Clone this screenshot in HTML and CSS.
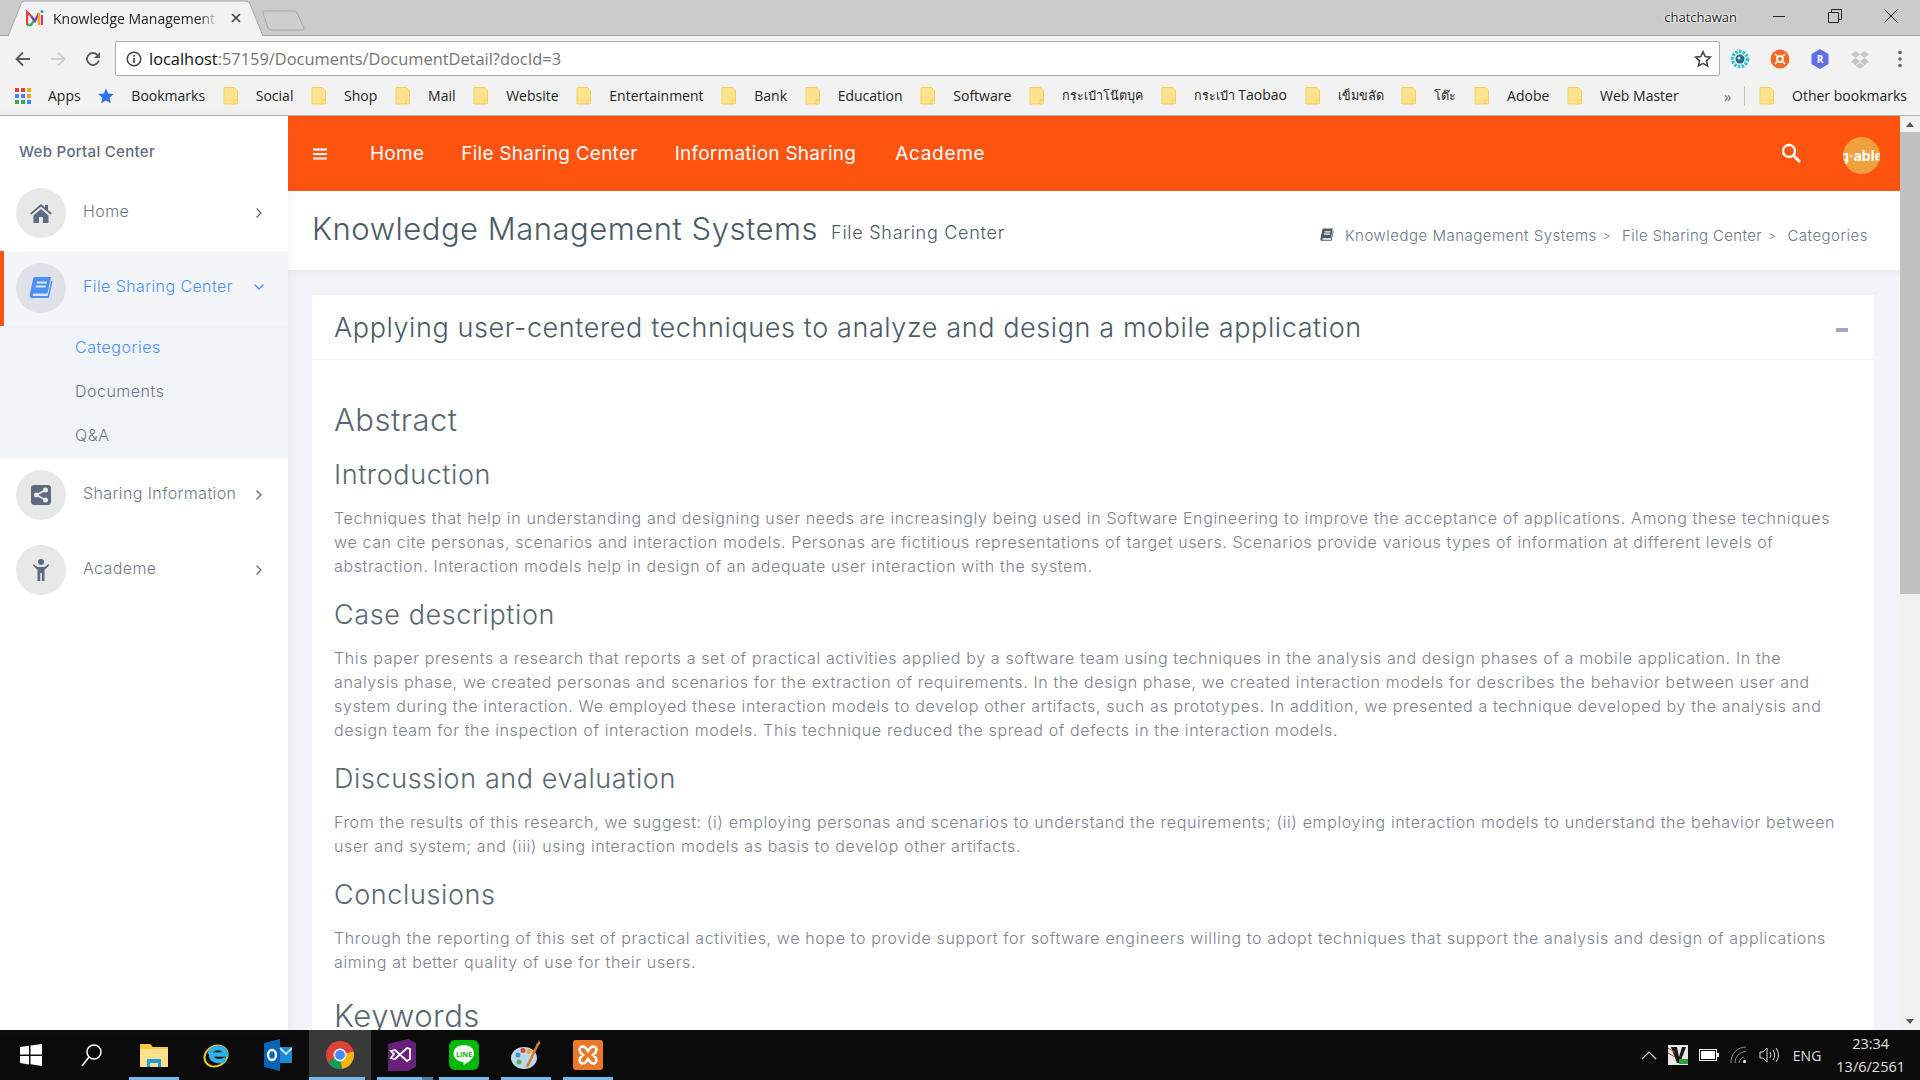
FILE: index.html
```html
<!DOCTYPE html>
<html lang="en">
<head>
    <meta charset="UTF-8">
    <title>Knowledge Management Systems</title>
    <link rel="stylesheet" href="styles.css">
</head>
<body>
    <svg class="defs" width="0" height="0">
        <symbol id="folder" viewBox="0 0 16 20">
            <path d="M1 1.500h10.500l3 3v12a1.500 1.500 0 0 1-1.500 1.500h-12z" fill="#fee38d" stroke="#f3cf62"/>
            <path d="M11 18v-4h3.500v4" fill="none" stroke="#f3cf62"/>
        </symbol>
        <symbol id="chev-right" viewBox="0 0 8 12"><path d="M1.500 1.500 6 6l-4.500 4.500" fill="none" stroke="currentColor" stroke-width="1.300"/></symbol>
        <symbol id="book" viewBox="0 0 24 24">
            <path fill="currentColor" d="M6 1h16l-3.500 16.500H5.500c-1.200 0-1.800.6-1.800 1.300 0 .8.600 1.300 1.800 1.300h13.200l3.500-15.600 1.300.8-3.600 16.600H4.500C1.800 22.900.3 21 .8 18.500L4 3C4.300 1.800 5 1 6 1zm2 4.500-.4 2h10l.4-2zm-1 4-.4 2h10l.4-2z"/>
        </symbol>
    </svg>

    <header class="browser">
        <div class="tabstrip">
            <div class="tab">
                <svg class="tab-shape" width="262" height="36" viewBox="0 0 262 36"><path d="M2 36 15 4Q16 1 19 1H240Q243 1 244 4L257 36" fill="#f2f2f2" stroke="#a8a8a8"/></svg>
                <svg class="favicon" width="18" height="18" viewBox="0 0 18 18">
                    <path d="M1 16V3l4 4" fill="none" stroke="#e2403c" stroke-width="2.400"/>
                    <path d="M1 16h4l4-6" fill="none" stroke="#35b36a" stroke-width="2.400"/>
                    <path d="M5 7l4 5 4-8" fill="none" stroke="#7a3fb0" stroke-width="2.400"/>
                    <path d="M13 16V4" stroke="#f2a51f" stroke-width="2.600"/>
                    <path d="M16 16V6" stroke="#d6336c" stroke-width="2"/>
                    <circle cx="16" cy="2.500" r="1.500" fill="#1f9be0"/>
                </svg>
                <span class="tab-title">Knowledge Management</span>
                <svg class="tab-close" width="10" height="10" viewBox="0 0 10 10"><path d="M1 1l8 8M9 1 1 9" stroke="#444" stroke-width="1.700"/></svg>
            </div>
            <svg class="newtab" width="44" height="22" viewBox="0 0 44 22"><path d="M1 2h31q2 0 3 2l7 15q.5 2-2 2H9q-2 0-3-2L1 4q-1-2 0-2z" fill="#cecece" stroke="#a6a6a6"/></svg>
            <span class="win-user">chatchawan</span>
            <div class="win-controls">
                <svg width="14" height="14" viewBox="0 0 14 14"><path d="M1 7.500h12" stroke="#222"/></svg>
                <svg width="14" height="14" viewBox="0 0 14 14"><path d="M.5 3.500h10v10H.5zM3.500 3.500V.5h10v10h-3" fill="none" stroke="#222"/></svg>
                <svg width="14" height="14" viewBox="0 0 14 14"><path d="M.5.500l13 13M13.500.5l-13 13" stroke="#222"/></svg>
            </div>
        </div>

        <div class="toolbar">
            <div class="nav-btns">
                <svg width="16" height="16" viewBox="0 0 16 16"><path d="M15 8H2M8 1.500 1.500 8 8 14.500" fill="none" stroke="#5a5a5a" stroke-width="1.800"/></svg>
                <svg width="16" height="16" viewBox="0 0 16 16"><path d="M1 8h13M8 1.500 14.500 8 8 14.500" fill="none" stroke="#cfcfcf" stroke-width="1.800"/></svg>
                <svg width="16" height="16" viewBox="0 0 16 16"><path d="M13.800 9.500A6 6 0 1 1 12.300 3.800" fill="none" stroke="#5a5a5a" stroke-width="1.800"/><path d="M15 1v6h-6z" fill="#5a5a5a"/></svg>
            </div>
            <div class="omnibox">
                <svg class="info" width="16" height="16" viewBox="0 0 16 16"><circle cx="8" cy="8" r="6.800" fill="none" stroke="#444" stroke-width="1.500"/><path d="M8 7v5M8 4v1.800" stroke="#444" stroke-width="1.600"/></svg>
                <span class="url"><b>localhost</b>:57159/Documents/DocumentDetail?docId=3</span>
                <svg class="star" width="18" height="18" viewBox="0 0 18 18"><path d="M9 1.800l2.200 4.800 5.200.6-3.900 3.500 1.100 5.200L9 13.300l-4.600 2.600 1.100-5.200L1.600 7.200l5.200-.6z" fill="none" stroke="#444" stroke-width="1.600"/></svg>
            </div>
            <div class="ext-icons">
                <svg width="20" height="20" viewBox="0 0 20 20"><circle cx="10" cy="10" r="7.500" fill="none" stroke="#2cc3d0" stroke-width="3.500" stroke-dasharray="2.500 1.300"/><circle cx="10" cy="10" r="4.500" fill="#1d6f8c"/><circle cx="9" cy="9" r="1.500" fill="#d8f4f6"/></svg>
                <svg width="20" height="20" viewBox="0 0 20 20"><circle cx="10" cy="10" r="9.500" fill="#f26a25"/><circle cx="10" cy="10" r="3" fill="none" stroke="#fff" stroke-width="1.800"/><path d="M5 5l2 2M15 5l-2 2M5 15l2-2M15 15l-2-2" stroke="#fff" stroke-width="1.500"/></svg>
                <svg width="20" height="20" viewBox="0 0 20 20"><path d="M10 0l8.500 5v10L10 20 1.500 15V5z" fill="#5d6ee6"/><text x="10" y="14" class="ext-r">R</text></svg>
                <svg width="20" height="20" viewBox="0 0 20 20"><path d="M5.500 2 1 5.500 5.500 9 10 5.500zM14.500 2 10 5.500 14.500 9 19 5.500zM5.500 9 1 12.500 5.500 16 10 12.500zM14.500 9 10 12.500 14.500 16 19 12.500zM5.500 17 10 14l4.500 3L10 19.500z" fill="#c6c6c6"/></svg>
                <svg width="20" height="20" viewBox="0 0 20 20"><circle cx="10" cy="3.500" r="1.800" fill="#666"/><circle cx="10" cy="10" r="1.800" fill="#666"/><circle cx="10" cy="16.500" r="1.800" fill="#666"/></svg>
            </div>
        </div>

        <div class="bookmarks">
            <span class="bm apps">
                <svg width="16" height="16" viewBox="0 0 16 16">
                    <path d="M0 0h4v4H0z" fill="#e2403c"/><path d="M6 0h4v4H6z" fill="#e2403c"/><path d="M12 0h4v4h-4z" fill="#f2a51f"/>
                    <path d="M0 6h4v4H0z" fill="#4285f4"/><path d="M6 6h4v4H6z" fill="#4285f4"/><path d="M12 6h4v4h-4z" fill="#f2a51f"/>
                    <path d="M0 12h4v4H0z" fill="#34a853"/><path d="M6 12h4v4H6z" fill="#34a853"/><path d="M12 12h4v4h-4z" fill="#4285f4"/>
                </svg>
                Apps
            </span>
            <span class="bm">
                <svg width="16" height="16" viewBox="0 0 16 16"><path d="M8 .5l2.300 5 5.400.600-4 3.700 1.100 5.400L8 12.500l-4.800 2.700 1.100-5.400-4-3.700 5.400-.600z" fill="#2f74e8"/></svg>
                Bookmarks
            </span>
            <span class="bm"><svg class="folder"><use href="#folder"/></svg>Social</span>
            <span class="bm"><svg class="folder"><use href="#folder"/></svg>Shop</span>
            <span class="bm"><svg class="folder"><use href="#folder"/></svg>Mail</span>
            <span class="bm"><svg class="folder"><use href="#folder"/></svg>Website</span>
            <span class="bm"><svg class="folder"><use href="#folder"/></svg>Entertainment</span>
            <span class="bm"><svg class="folder"><use href="#folder"/></svg>Bank</span>
            <span class="bm"><svg class="folder"><use href="#folder"/></svg>Education</span>
            <span class="bm"><svg class="folder"><use href="#folder"/></svg>Software</span>
            <span class="bm"><svg class="folder"><use href="#folder"/></svg><span class="th">กระเป๋าโน๊ตบุค</span></span>
            <span class="bm"><svg class="folder"><use href="#folder"/></svg><span><span class="th">กระเป๋า</span> Taobao</span></span>
            <span class="bm"><svg class="folder"><use href="#folder"/></svg><span class="th">เข็มขลัด</span></span>
            <span class="bm"><svg class="folder"><use href="#folder"/></svg><span class="th">โต๊ะ</span></span>
            <span class="bm"><svg class="folder"><use href="#folder"/></svg>Adobe</span>
            <span class="bm"><svg class="folder"><use href="#folder"/></svg>Web Master</span>
            <span class="bm-more">»</span>
            <span class="bm bm-other"><svg class="folder"><use href="#folder"/></svg>Other bookmarks</span>
        </div>
    </header>

    <div class="viewport">
        <aside class="sidebar">
            <div class="brand">Web Portal Center</div>
            <a class="menu-item">
                <span class="menu-icon">
                    <svg width="22" height="20" viewBox="0 0 22 20"><path d="M11 1 0 10.500l1.200 1.300L11 3.500l9.800 8.300 1.200-1.300-4-3.400V2h-3v2.400zM3.500 12.500V20h5.500v-6h4v6h5.500v-7.500L11 6z" fill="#5f6b80"/></svg>
                </span>
                <span class="menu-text">Home</span>
                <svg class="menu-arrow"><use href="#chev-right"/></svg>
            </a>
            <a class="menu-item active">
                <span class="menu-icon"><svg class="book-lg"><use href="#book"/></svg></span>
                <span class="menu-text">File Sharing Center</span>
                <svg class="menu-arrow down" viewBox="0 0 12 8"><path d="M1.500 1.500 6 6l4.500-4.500" fill="none" stroke="currentColor" stroke-width="1.300"/></svg>
            </a>
            <div class="submenu">
                <a class="sub-item current">Categories</a>
                <a class="sub-item">Documents</a>
                <a class="sub-item">Q&amp;A</a>
            </div>
            <a class="menu-item">
                <span class="menu-icon">
                    <svg width="20" height="20" viewBox="0 0 20 20"><rect width="20" height="20" rx="3" fill="#5f6b80"/><g fill="#e8e8e8"><circle cx="14.500" cy="5" r="2.500"/><circle cx="5.500" cy="10" r="2.500"/><circle cx="14.500" cy="15" r="2.500"/></g><path d="M14.500 5l-9 5 9 5" fill="none" stroke="#e8e8e8" stroke-width="1.500"/></svg>
                </span>
                <span class="menu-text">Sharing Information</span>
                <svg class="menu-arrow"><use href="#chev-right"/></svg>
            </a>
            <a class="menu-item">
                <span class="menu-icon">
                    <svg width="16" height="22" viewBox="0 0 16 22"><circle cx="8" cy="3" r="3" fill="#5f6b80"/><path d="M.5 5 4.500 8h7l4-3 .5 1.500L11.500 11v11H8.800v-8H7.200v8H4.500V11L0 6.500z" fill="#5f6b80"/></svg>
                </span>
                <span class="menu-text">Academe</span>
                <svg class="menu-arrow"><use href="#chev-right"/></svg>
            </a>
        </aside>

        <div class="main">
            <nav class="topbar">
                <svg class="burger" width="14" height="12" viewBox="0 0 14 12"><path d="M0 1.500h14M0 6h14M0 10.500h14" stroke="#fff" stroke-width="2"/></svg>
                <a class="top-link">Home</a>
                <a class="top-link">File Sharing Center</a>
                <a class="top-link">Information Sharing</a>
                <a class="top-link">Academe</a>
                <svg class="top-search" width="20" height="20" viewBox="0 0 20 20"><circle cx="8" cy="8" r="6" fill="none" stroke="#fff" stroke-width="2.400"/><path d="M12.500 12.500 19 19" stroke="#fff" stroke-width="2.800"/></svg>
                <span class="avatar"><span class="avatar-text">g·able</span></span>
            </nav>

            <div class="subheader">
                <h1 class="page-title">Knowledge Management Systems</h1>
                <span class="page-sub">File Sharing Center</span>
                <div class="crumbs">
                    <svg class="book-sm"><use href="#book"/></svg>
                    <span class="crumb c1">Knowledge Management Systems</span>
                    <span class="crumb-sep">&gt;</span>
                    <span class="crumb c2">File Sharing Center</span>
                    <span class="crumb-sep">&gt;</span>
                    <span class="crumb c3">Categories</span>
                </div>
            </div>

            <div class="content">
                <section class="card">
                    <div class="card-head">
                        <h2 class="card-title">Applying user-centered techniques to analyze and design a mobile application</h2>
                        <span class="card-min"></span>
                    </div>
                    <div class="card-body">
                        <h3 class="h-main">Abstract</h3>
                        <h4 class="h-sec">Introduction</h4>
                        <p>Techniques that help in understanding and designing user needs are increasingly being used in Software Engineering to improve the acceptance of applications. Among these techniques<br>we can cite personas, scenarios and interaction models. Personas are fictitious representations of target users. Scenarios provide various types of information at different levels of<br>abstraction. Interaction models help in design of an adequate user interaction with the system.</p>
                        <h4 class="h-sec">Case description</h4>
                        <p>This paper presents a research that reports a set of practical activities applied by a software team using techniques in the analysis and design phases of a mobile application. In the<br>analysis phase, we created personas and scenarios for the extraction of requirements. In the design phase, we created interaction models for describes the behavior between user and<br>system during the interaction. We employed these interaction models to develop other artifacts, such as prototypes. In addition, we presented a technique developed by the analysis and<br>design team for the inspection of interaction models. This technique reduced the spread of defects in the interaction models.</p>
                        <h4 class="h-sec">Discussion and evaluation</h4>
                        <p>From the results of this research, we suggest: (i) employing personas and scenarios to understand the requirements; (ii) employing interaction models to understand the behavior between<br>user and system; and (iii) using interaction models as basis to develop other artifacts.</p>
                        <h4 class="h-sec">Conclusions</h4>
                        <p>Through the reporting of this set of practical activities, we hope to provide support for software engineers willing to adopt techniques that support the analysis and design of applications<br>aiming at better quality of use for their users.</p>
                        <h3 class="h-main h-keywords">Keywords</h3>
                    </div>
                </section>
            </div>
        </div>

        <div class="scrollbar">
            <span class="arrow-up"></span>
            <span class="thumb"></span>
            <span class="arrow-down"></span>
        </div>
    </div>

    <footer class="taskbar">
        <span class="task task-start">
            <svg width="24" height="24" viewBox="0 0 24 24"><path d="M1 4l9-1.300v8.800H1zM11.500 2.500 23 1v10.500H11.500zM1 13h9v8.500L1 20zM11.500 13H23v10l-11.500-1.700z" fill="#fff"/></svg>
        </span>
        <span class="task">
            <svg width="22" height="24" viewBox="0 0 22 24"><circle cx="13" cy="9" r="7" fill="none" stroke="#fff" stroke-width="1.500"/><path d="M8 14 1 23" stroke="#fff" stroke-width="1.600"/></svg>
        </span>
        <span class="task open">
            <svg width="28" height="24" viewBox="0 0 28 24"><path d="M0 1h10l3 3h15v20H0z" fill="#f6c93f"/><path d="M0 6h28v18H0z" fill="#fde08a"/><path d="M7 24v-8h14v8h-3v-4h-8v4z" fill="#1f9be0"/></svg>
        </span>
        <span class="task">
            <svg width="30" height="32" viewBox="0 0 30 32"><ellipse cx="15" cy="17" rx="12" ry="10" fill="none" stroke="#f0c419" stroke-width="2" transform="rotate(-30 15 17)"/><path d="M27 15.500H10c0 6 8 9 15 4.500" fill="none" stroke="#2cb3ea" stroke-width="4.500"/><path d="M9 15c1-7 13-9 16 0" fill="none" stroke="#2cb3ea" stroke-width="5"/></svg>
        </span>
        <span class="task">
            <svg width="28" height="32" viewBox="0 0 28 32"><path d="M0 4l16-4v32L0 28z" fill="#0a64b5"/><path d="M16 8h12v16H16z" fill="#1d8ad8"/><path d="M16 9l6 6 6-6" fill="none" stroke="#fff" stroke-width="1.500"/><ellipse cx="8" cy="16" rx="4" ry="5" fill="none" stroke="#fff" stroke-width="2.400"/></svg>
        </span>
        <span class="task task-chrome open">
            <svg width="28" height="28" viewBox="0 0 28 28"><circle cx="14" cy="14" r="14" fill="#dc4437"/><path d="M14 14 2 21a14 14 0 0 0 14 6.800z" fill="#109d58"/><path d="M14 14l13.500-3.500A14 14 0 0 1 16 27.800z" fill="#f5b70f"/><circle cx="14" cy="14" r="6.500" fill="#fff"/><circle cx="14" cy="14" r="5" fill="#4c8bf5"/></svg>
        </span>
        <span class="task open task-vs">
            <svg width="28" height="32" viewBox="0 0 28 32"><path d="M0 5 20 0l8 4v24l-8 4H0z" fill="#68217a"/><path d="M3 12l4-1 12 11 3-2V10l-3-1-12 11-4-1 3-4z" fill="none" stroke="#fff" stroke-width="1.800"/></svg>
        </span>
        <span class="task open">
            <svg width="30" height="30" viewBox="0 0 30 30"><rect width="30" height="30" rx="6" fill="#00b900"/><path d="M15 5c-6 0-10.500 3.500-10.500 8.500 0 4.500 4 8 9.500 8.500 1 .2.500 2 .5 3 3-1.500 10.500-6 10.500-11.500C25 8.500 21 5 15 5z" fill="#fff"/><text x="15" y="16.500" class="line-txt">LINE</text></svg>
        </span>
        <span class="task open">
            <svg width="30" height="30" viewBox="0 0 30 30"><ellipse cx="13" cy="18" rx="13" ry="11" fill="#bcd9ec"/><circle cx="7" cy="15" r="2.500" fill="#3f8fd6"/><circle cx="12" cy="10.500" r="2.500" fill="#e2403c"/><circle cx="18" cy="11.500" r="2.500" fill="#f2a51f"/><circle cx="8" cy="22" r="2.500" fill="#5fb14a"/><path d="M16 27 27 4" stroke="#d97a26" stroke-width="2.500"/><path d="M25 6 28 0l1.500 4z" fill="#b98a5a"/></svg>
        </span>
        <span class="task open">
            <svg width="30" height="30" viewBox="0 0 30 30"><rect width="30" height="30" rx="3" fill="#ea7a2b"/><path d="M8 7c3-2 5 1 7 4 2-3 4-6 7-4 3 2 1 6-2 8 3 2 5 6 2 8-3 2-5-1-7-4-2 3-4 6-7 4-3-2-1-6 2-8-3-2-5-6-2-8z" fill="none" stroke="#fff" stroke-width="2.400"/></svg>
        </span>
        <div class="tray">
            <svg width="16" height="10" viewBox="0 0 16 10"><path d="M1 9l7-7 7 7" fill="none" stroke="#ddd" stroke-width="1.200"/></svg>
            <svg width="20" height="20" viewBox="0 0 20 20"><rect width="20" height="20" fill="#e8e8e8"/><path d="M3 2h6l2 10 3-10h4l-6 16h-3z" fill="#1a1a1a"/><path d="M0 3l7 4M0 8l7 4" stroke="#c9302c"/><path d="M11 14h9v5h-9z" fill="#2e9c3e"/></svg>
            <svg width="20" height="12" viewBox="0 0 20 12"><rect x=".5" y=".5" width="17" height="11" fill="none" stroke="#eee"/><rect x="2" y="2" width="14" height="8" fill="#fff"/><rect x="18" y="4" width="2" height="4" fill="#eee"/></svg>
            <svg width="18" height="18" viewBox="0 0 18 18"><path d="M1 17A15 15 0 0 1 16 1M5 17A11 11 0 0 1 16 5.500M9 17a7 7 0 0 1 5-6" fill="none" stroke="#888"/><circle cx="14.500" cy="15.500" r="1.600" fill="#eee"/></svg>
            <svg width="20" height="16" viewBox="0 0 20 16"><path d="M1 5h3l4-4v14l-4-4H1zM11 5q2 3 0 6M14 3q3.500 5 0 10M17 1q5 7 0 14" fill="none" stroke="#ddd"/></svg>
            <span class="tray-lang">ENG</span>
            <span class="tray-clock">23:34<br>13/6/2561</span>
        </div>
    </footer>
</body>
</html>
```

FILE: styles.css
```css
html, body {
    margin: 0;
    padding: 0;
    height: 100%;
    overflow: hidden;
}

body {
    display: flex;
    flex-direction: column;
    height: 1080px;
    background: #fff;
    font-family: 'Inter', sans-serif;
    color: #878b96;
}

.defs {
    position: absolute;
}

/* Browser chrome */
.browser {
    flex: none;
    font-family: 'Open Sans', 'Noto Sans', sans-serif;
}

.tabstrip {
    display: flex;
    align-items: flex-start;
    height: 35px;
    background: #cbcbcb;
    border-bottom: 1px solid #a4a4a4;
}

.tab {
    position: relative;
    display: flex;
    align-items: center;
    width: 262px;
    height: 36px;
    margin-left: 6px;
    z-index: 1;
}

.tab-shape {
    position: absolute;
    left: 0;
    top: 0;
}

.favicon {
    position: relative;
    margin-left: 20px;
}

.tab-title {
    position: relative;
    width: 166px;
    margin-left: 9px;
    overflow: hidden;
    white-space: nowrap;
    font-size: 14px;
    color: #222;
    -webkit-mask-image: linear-gradient(to right, #000 88%, transparent);
}

.tab-close {
    position: relative;
    margin-left: 12px;
}

.newtab {
    margin: 9px 0 0 -6px;
}

.win-user {
    margin: 8px 0 0 auto;
    font-size: 13px;
    color: #222;
    text-shadow: 0 0 2px #fff, 0 0 2px #fff, 0 0 2px #fff;
}

.win-controls {
    display: flex;
    gap: 42px;
    margin: 9px 22px 0 35px;
}

.toolbar {
    display: flex;
    align-items: center;
    height: 40px;
    box-sizing: border-box;
    padding-top: 5px;
    background: #f2f2f2;
}

.nav-btns {
    display: flex;
    gap: 19px;
    width: 115px;
    padding-left: 15px;
    box-sizing: border-box;
}

.omnibox {
    display: flex;
    align-items: center;
    width: 1605px;
    height: 35px;
    box-sizing: border-box;
    background: #fff;
    border: 1px solid #adadad;
    border-radius: 2px;
}

.info {
    margin-left: 10px;
}

.url {
    margin-left: 7px;
    font-size: 16.400px;
    color: #757575;
}

.url b {
    font-weight: 400;
    color: #111;
}

.star {
    margin-left: auto;
    margin-right: 7px;
}

.ext-icons {
    display: flex;
    gap: 20px;
    margin-left: 10px;
}

.ext-r {
    fill: #fff;
    font-size: 10px;
    font-weight: 700;
    text-anchor: middle;
}

.bookmarks {
    display: flex;
    align-items: center;
    gap: 17.700px;
    height: 39px;
    padding: 0 13px 0 15px;
    background: #f2f2f2;
    border-bottom: 1px solid #b5b5b5;
    font-size: 14px;
    color: #222;
    white-space: nowrap;
}

.bm {
    display: flex;
    align-items: center;
    gap: 17px;
}

.th {
    font-size: 12.600px;
}

.folder {
    width: 16px;
    height: 20px;
}

.bm-more {
    margin-left: auto;
    color: #666;
    font-size: 15px;
}

.bm-other {
    margin-left: -5px;
    padding-left: 14px;
    border-left: 1px solid #c4c4c4;
}

/* Page */
.viewport {
    flex: 1;
    display: flex;
    min-height: 0;
}

.sidebar {
    flex: none;
    width: 288px;
    background: #fff;
    position: relative;
    z-index: 1;
    box-shadow: 0 0 12px rgba(80, 90, 120, 0.08);
}

.brand {
    display: flex;
    align-items: center;
    height: 60px;
    padding: 10px 0 0 19px;
    box-sizing: border-box;
    font-size: 15px;
    letter-spacing: 0.3px;
    font-weight: 500;
    color: #5f6b80;
}

.menu-item {
    display: flex;
    align-items: center;
    height: 75px;
    padding-left: 16px;
    box-sizing: border-box;
    font-size: 16px;
    letter-spacing: 0.4px;
    font-weight: 300;
    color: #6f7888;
}

.menu-item.active {
    padding-left: 12px;
    background: #f3f5f9;
    border-left: 4px solid #ff5310;
    color: #4d90f5;
}

.menu-icon {
    flex: none;
    display: flex;
    align-items: center;
    justify-content: center;
    width: 50px;
    height: 50px;
    margin: -1px 17px 0 0;
    border-radius: 50%;
    background: #e8e8e8;
}

.active .menu-icon {
    background: #dfe2e8;
}

.book-lg {
    width: 24px;
    height: 24px;
}

.menu-text {
    flex: 1;
    margin-top: -5px;
}

.menu-arrow {
    flex: none;
    width: 8px;
    height: 12px;
    margin: -2px 25px 0 0;
    color: #667;
}

.menu-arrow.down {
    width: 12px;
    margin: -3px 23px 0 0;
    color: #4d90f5;
}

.submenu {
    display: flex;
    flex-direction: column;
    height: 132px;
    background: #f0f3f7;
}

.sub-item {
    display: flex;
    align-items: center;
    height: 44px;
    padding: 0 0 2px 75px;
    box-sizing: border-box;
    font-size: 16px;
    letter-spacing: 0.5px;
    font-weight: 300;
    color: #6f7888;
}

.sub-item.current {
    color: #4d90f5;
}

.main {
    flex: 1;
    min-width: 0;
    display: flex;
    flex-direction: column;
    background: #f2f3f8;
}

.topbar {
    flex: none;
    display: flex;
    align-items: center;
    height: 75px;
    padding-left: 25px;
    background: #ff5310;
}

.burger {
    margin-right: 43px;
}

.top-link {
    margin-right: 37px;
    font-size: 19px;
    letter-spacing: 0.25px;
    font-weight: 400;
    color: #fff;
}

.top-link:last-of-type {
    margin-left: 2px;
    letter-spacing: 0.7px;
}

.top-search {
    margin: -2px 42px 0 auto;
}

.avatar {
    display: flex;
    align-items: center;
    justify-content: center;
    width: 37px;
    height: 37px;
    margin: 4px 20px 0 0;
    overflow: hidden;
    border-radius: 50%;
    background: #f0a03c;
}

.avatar-text {
    font-size: 14px;
    font-weight: 700;
    color: #fff;
    white-space: nowrap;
}

.subheader {
    flex: none;
    display: flex;
    align-items: center;
    height: 79px;
    padding: 0 32px 0 24px;
    background: #fff;
    box-shadow: 0 2px 6px rgba(80, 90, 120, 0.06);
}

.page-title {
    margin: -5px 0 0;
    font-size: 31px;
    letter-spacing: 0.52px;
    font-weight: 300;
    color: #4a5a66;
}

.page-sub {
    margin-left: 13px;
    margin-top: 3px;
    font-size: 18px;
    letter-spacing: 0.73px;
    font-weight: 300;
    color: #4a5a66;
}

.crumbs {
    display: flex;
    align-items: center;
    margin-left: auto;
    margin-top: 9px;
    font-size: 15px;
    letter-spacing: 0.5px;
    font-weight: 300;
    color: #6b7785;
}

.c2 {
    letter-spacing: 0.35px;
}

.book-sm {
    width: 14px;
    height: 14px;
    margin-right: 11px;
    color: #4a5a66;
}

.crumb-sep {
    margin: 0 11px 0 6px;
    font-size: 12px;
}

.content {
    flex: 1;
    min-height: 0;
    overflow: hidden;
    padding: 25px 26px 0 24px;
}

.card {
    background: #fff;
}

.card-head {
    display: flex;
    align-items: center;
    justify-content: space-between;
    height: 65px;
    padding: 0 26px 0 22px;
    box-sizing: border-box;
    border-bottom: 1px solid #f0f1f5;
}

.card-title {
    margin: 0;
    font-size: 27px;
    letter-spacing: 0.6px;
    font-weight: 300;
    color: #4a5a66;
}

.card-min {
    width: 12px;
    height: 4px;
    margin-top: 6px;
    background: #a3a8c0;
}

.card-body {
    padding: 40px 22px 0;
}

.h-main {
    margin: 0 0 17px;
    height: 40px;
    line-height: 40px;
    font-size: 31px;
    letter-spacing: 0.5px;
    font-weight: 300;
    color: #5a6773;
}

.h-sec {
    margin: 0 0 13px;
    height: 36px;
    line-height: 36px;
    font-size: 27px;
    letter-spacing: 0.6px;
    font-weight: 300;
    color: #5a6773;
}

.card-body p {
    margin: 0 0 19px;
    font-size: 16px;
    letter-spacing: 0.63px;
    line-height: 24px;
    font-weight: 300;
    color: #7d818b;
    white-space: nowrap;
}

.h-keywords {
    margin-top: 22px;
}

.scrollbar {
    flex: none;
    width: 20px;
    display: flex;
    flex-direction: column;
    align-items: center;
    background: #f1f1f1;
}

.thumb {
    width: 20px;
    height: 462px;
    margin-top: 5px;
    background: #c1c1c1;
}

.arrow-up, .arrow-down {
    width: 0;
    height: 0;
    margin-top: 6px;
    border-left: 4px solid transparent;
    border-right: 4px solid transparent;
    border-bottom: 5px solid #555;
}

.arrow-down {
    margin-top: auto;
    margin-bottom: 6px;
    border-bottom: 0;
    border-top: 5px solid #555;
}

/* Windows taskbar */
.taskbar {
    flex: none;
    display: flex;
    align-items: stretch;
    height: 50px;
    background: #0b0b0b;
    font-family: 'Open Sans', 'Noto Sans', sans-serif;
    color: #e0e0e0;
}

.task {
    flex: none;
    position: relative;
    display: flex;
    align-items: center;
    justify-content: center;
    width: 62px;
    box-sizing: border-box;
}

.task-start {
    width: 61px;
}

.task.open::after {
    content: '';
    position: absolute;
    left: 6px;
    right: 6px;
    bottom: 0;
    height: 3px;
    background: #76b9ed;
}

.task-chrome {
    background: #3a3a3a;
}

.task-chrome.open::after {
    left: 0;
}

.task-vs.open::after {
    right: 0;
    background: linear-gradient(to right, #76b9ed 80%, #4f7fa8 80%);
}

.line-txt {
    fill: #00b900;
    font-size: 7px;
    font-weight: 700;
    text-anchor: middle;
}

.tray {
    display: flex;
    align-items: center;
    gap: 11px;
    margin-left: auto;
    padding-right: 15px;
}

.tray-lang {
    margin-left: 3px;
    font-size: 14px;
}

.tray-clock {
    margin-left: 4px;
    font-size: 14.500px;
    line-height: 23px;
    text-align: center;
}
```
